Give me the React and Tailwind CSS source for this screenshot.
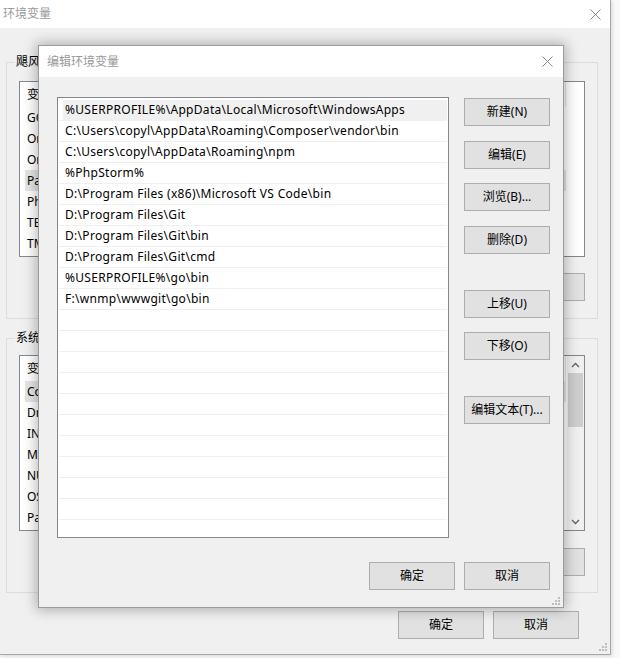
import React from "react";

function Btn({ children, className = "" }) {
  return (
    <div
      className={`h-[28px] w-[86px] shrink-0 flex items-center justify-center bg-[#e1e1e1] border border-[#adadad] text-[12px] leading-[16px] text-black ${className}`}
    >
      {children}
    </div>
  );
}

function CloseX({ color = "#777" }) {
  return (
    <svg width="11" height="11" viewBox="0 0 11 11">
      <path d="M0.5 0.5 L10.5 10.5 M10.5 0.5 L0.5 10.5" stroke={color} strokeWidth="1" />
    </svg>
  );
}

function Grip() {
  return (
    <svg width="8" height="8" viewBox="0 0 8 8">
      <rect x="6" y="0" width="2" height="2" fill="#bdbdbd" />
      <rect x="3" y="3" width="2" height="2" fill="#bdbdbd" />
      <rect x="6" y="3" width="2" height="2" fill="#bdbdbd" />
      <rect x="0" y="6" width="2" height="2" fill="#bdbdbd" />
      <rect x="3" y="6" width="2" height="2" fill="#bdbdbd" />
      <rect x="6" y="6" width="2" height="2" fill="#bdbdbd" />
    </svg>
  );
}

function BgList({ rows, sel, scroll }) {
  return (
    <div className="h-[176px] border border-[#828790] bg-white flex overflow-hidden">
      <div className="flex-1 flex flex-col">
        <div className="h-[25px] flex items-center shrink-0">
          <div className="w-[546px] h-full flex items-center border-r border-[#e5e5e5] pl-[7px] text-[12px] text-black">
            <span className="w-[170px]">变量</span>
            <span>值</span>
          </div>
        </div>
        {rows.map((r, i) => (
          <div key={i} className="h-[21px] flex items-center shrink-0 pl-[5px]">
            <div
              className={`w-[541px] h-full flex items-center pl-[2px] text-[12px] text-black ${
                i === sel ? "bg-[#e5e5e5]" : ""
              }`}
            >
              <span className="w-[170px] whitespace-nowrap">{r[0]}</span>
              <span className="whitespace-nowrap">{r[1]}</span>
            </div>
          </div>
        ))}
      </div>
      {scroll && (
        <div className="w-[17px] shrink-0 bg-[#f0f0f0] flex flex-col items-center">
          <div className="h-[17px] w-full flex items-center justify-center">
            <svg width="9" height="6" viewBox="0 0 9 6">
              <path d="M1 5 L4.5 1.5 L8 5" stroke="#606060" strokeWidth="1.3" fill="none" />
            </svg>
          </div>
          <div className="w-[15px] h-[54px] bg-[#cdcdcd]" />
          <div className="flex-1" />
          <div className="h-[17px] w-full flex items-center justify-center">
            <svg width="9" height="6" viewBox="0 0 9 6">
              <path d="M1 1 L4.5 4.5 L8 1" stroke="#606060" strokeWidth="1.3" fill="none" />
            </svg>
          </div>
        </div>
      )}
    </div>
  );
}

const userRows = [
  ["GOPATH", "F:\\wnmp\\wwwgit\\go"],
  ["OneDrive", "C:\\Users\\copyl\\OneDrive"],
  ["OneDriveConsumer", "C:\\Users\\copyl\\OneDrive"],
  ["Path", "%USERPROFILE%\\AppData\\Local\\Microsoft\\WindowsApps;"],
  ["PhpStorm", "D:\\Program Files\\JetBrains\\PhpStorm\\bin;"],
  ["TEMP", "%USERPROFILE%\\AppData\\Local\\Temp"],
  ["TMP", "%USERPROFILE%\\AppData\\Local\\Temp"],
];

const sysRows = [
  ["ComSpec", "C:\\Windows\\system32\\cmd.exe"],
  ["DriverData", "C:\\Windows\\System32\\Drivers\\DriverData"],
  ["INCLUDE", "C:\\Program Files (x86)\\include"],
  ["MOZ_PLUGIN_PATH", "C:\\Program Files (x86)\\Foxit\\plugins\\"],
  ["NUMBER_OF_PROCESSORS", "8"],
  ["OS", "Windows_NT"],
  ["Path", "C:\\Windows\\system32;C:\\Windows;"],
];

const paths = [
  "%USERPROFILE%\\AppData\\Local\\Microsoft\\WindowsApps",
  "C:\\Users\\copyl\\AppData\\Roaming\\Composer\\vendor\\bin",
  "C:\\Users\\copyl\\AppData\\Roaming\\npm",
  "%PhpStorm%",
  "D:\\Program Files (x86)\\Microsoft VS Code\\bin",
  "D:\\Program Files\\Git",
  "D:\\Program Files\\Git\\bin",
  "D:\\Program Files\\Git\\cmd",
  "%USERPROFILE%\\go\\bin",
  "F:\\wnmp\\wwwgit\\go\\bin",
];

export default function App() {
  const allRows = [...paths, ...Array(12).fill("")];
  return (
    <div className="w-[620px] h-[658px] bg-[#f9f9f9] relative overflow-hidden font-['Noto_Sans','Noto_Sans_CJK_SC',sans-serif]">
      {/* background window */}
      <div className="w-[611px] h-[655px] bg-[#f0f0f0] border-r border-b border-[#a8a8a8] shadow-[1px_1px_4px_rgba(0,0,0,0.15)] flex flex-col relative">
        <div className="h-[28px] shrink-0 bg-white flex items-center justify-between pl-[3px] pr-[9px]">
          <span className="text-[12px] leading-[16px] text-[#9a9a9a]">环境变量</span>
          <CloseX color="#8a8a8a" />
        </div>

        <fieldset className="mx-[6px] mt-[26px] border border-[#dcdcdc] w-[592px]">
          <legend className="ml-[8px] px-[1px] text-[12px] leading-[16px] text-black">飓风 的用户变量(U)</legend>
          <div className="px-[12px] pt-[11px] pb-[17px]">
            <BgList rows={userRows} sel={3} />
            <div className="mt-[16px] flex justify-end gap-[9px]">
              <Btn>新建(N)...</Btn>
              <Btn>编辑(E)...</Btn>
              <Btn>删除(D)</Btn>
            </div>
          </div>
        </fieldset>

        <fieldset className="mx-[6px] mt-[11px] border border-[#dcdcdc] w-[592px]">
          <legend className="ml-[8px] px-[1px] text-[12px] leading-[16px] text-black">系统变量(S)</legend>
          <div className="px-[12px] pt-[9px] pb-[16px]">
            <BgList rows={sysRows} sel={0} scroll />
            <div className="mt-[17px] flex justify-end gap-[9px]">
              <Btn>新建(W)...</Btn>
              <Btn>编辑(I)...</Btn>
              <Btn>删除(L)</Btn>
            </div>
          </div>
        </fieldset>

        <div className="mt-[18px] flex justify-end gap-[9px] pr-[31px]">
          <Btn>确定</Btn>
          <Btn>取消</Btn>
        </div>

        <div className="absolute right-[3px] bottom-[3px] flex">
          <Grip />
        </div>
      </div>

      {/* edit dialog */}
      <div className="absolute left-[38px] top-[45px] w-[526px] h-[563px] border border-[#9b9b9b] bg-[#f0f0f0] shadow-[0_0_12px_2px_rgba(0,0,0,0.28)] flex flex-col">
        <div className="h-[31px] shrink-0 bg-white flex items-center justify-between pl-[8px] pr-[10px]">
          <span className="text-[12px] leading-[16px] text-[#9a9a9a]">编辑环境变量</span>
          <CloseX color="#8a8a8a" />
        </div>
        <div className="flex flex-col pl-[18px] pr-[13px] pt-[20px]">
          <div className="flex">
            <div className="w-[392px] h-[441px] border border-[#828790] bg-white overflow-hidden px-[1px] pt-[2px] flex flex-col">
              {allRows.map((p, i) => (
                <div key={i} className="h-[21px] shrink-0 border-b border-[#f0f0f0] flex pl-[4px]">
                  <div
                    className={`flex-1 flex items-center pl-[2px] text-[12px] tracking-[0.3px] text-black whitespace-nowrap ${
                      i === 0 ? "bg-[#f0f0f0]" : ""
                    }`}
                  >
                    {p}
                  </div>
                </div>
              ))}
            </div>
            <div className="ml-[15px] mt-[1px] flex flex-col">
              <Btn>新建(N)</Btn>
              <Btn className="mt-[15px]">编辑(E)</Btn>
              <Btn className="mt-[14px]">浏览(B)...</Btn>
              <Btn className="mt-[15px]">删除(D)</Btn>
              <Btn className="mt-[36px]">上移(U)</Btn>
              <Btn className="mt-[14px]">下移(O)</Btn>
              <Btn className="mt-[36px]">编辑文本(T)...</Btn>
            </div>
          </div>
          <div className="mt-[24px] flex justify-end gap-[9px]">
            <Btn>确定</Btn>
            <Btn>取消</Btn>
          </div>
        </div>
        <div className="absolute right-[3px] bottom-[2px] flex">
          <Grip />
        </div>
      </div>
    </div>
  );
}
